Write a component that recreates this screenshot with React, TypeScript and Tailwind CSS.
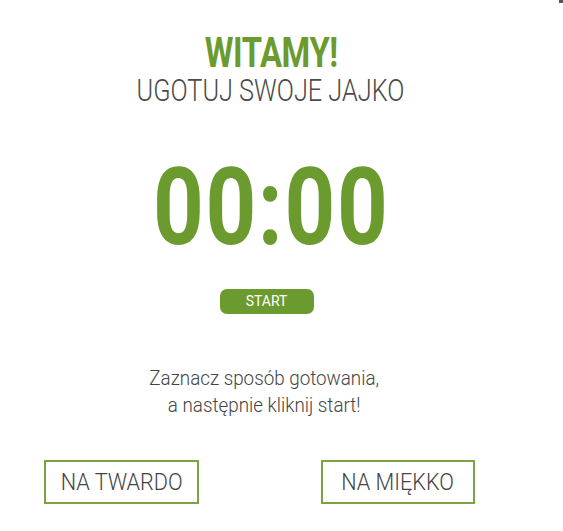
export default function App() {
  return (
    <div
      className="relative flex h-[531px] w-[563px] flex-col bg-white text-[#444]"
      style={{ fontFamily: "Roboto, 'Liberation Sans', sans-serif" }}
    >
      <div className="absolute right-0 top-0 h-[3px] w-[4px] bg-[#555]" />
      <div className="flex w-[542px] flex-col items-center">
        <h1 className="mt-[33px] text-[42px] leading-[40px] font-bold tracking-[-0.5px] text-[#6b9b2e] scale-x-[0.78]">
          WITAMY!
        </h1>
        <h2 className="text-[32px] leading-[34px] font-light text-[#4a4a4a] scale-x-[0.79]">
          UGOTUJ SWOJE JAJKO
        </h2>
        <div className="mt-[45px] text-[108px] leading-[110px] font-bold text-[#6b9b2e] scale-x-[0.82] tracking-[2px]">
          00:00
        </div>
        <button className="mt-[27px] mr-[9px] h-[25px] w-[94px] rounded-[7px] bg-[#6b9b2e] text-[14px] leading-[25px] text-white">
          START
        </button>
        <p className="mt-[51px] mr-[13px] text-center text-[20px] leading-[27px] font-light text-[#444] scale-x-[0.94]">
          Zaznacz sposób gotowania,
          <br />a następnie kliknij start!
        </p>
      </div>
      <div className="mt-[41px] flex gap-[122px] pl-[44px]">
        <button className="flex h-[44px] w-[155px] items-center justify-center border-2 border-[#7aa344] text-[24px] text-[#444] font-light">
          <span className="scale-x-[0.9]">NA TWARDO</span>
        </button>
        <button className="flex h-[44px] w-[154px] items-center justify-center border-2 border-[#7aa344] text-[24px] text-[#444] font-light">
          <span className="scale-x-[0.9]">NA MIĘKKO</span>
        </button>
      </div>
    </div>
  );
}
